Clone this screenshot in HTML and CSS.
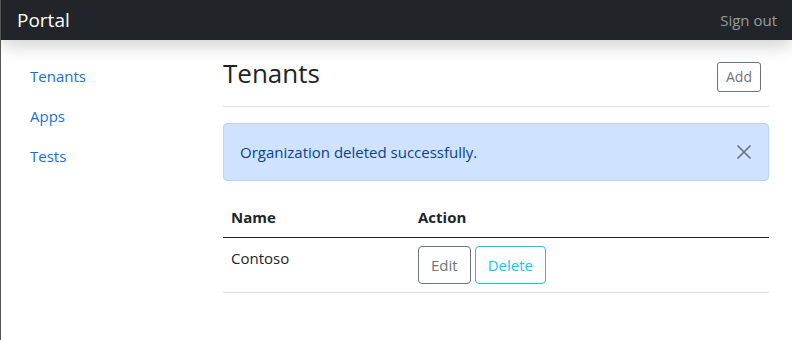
FILE: index.html
```html
<!DOCTYPE html>
<html lang="en">
<head>
    <meta charset="UTF-8">
    <meta name="viewport" content="width=device-width, initial-scale=1.0">
    <title>Portal</title>
    <link rel="stylesheet" href="styles.css">
</head>
<body>

<header class="navbar">
    <a class="brand" href="#">Portal</a>
    <a class="sign-out" href="#">Sign out</a>
</header>

<div class="layout">
    <!-- Menu lateral -->
    <nav class="sidebar">
        <ul class="nav-list">
            <li><a class="nav-link" href="#">Tenants</a></li>
            <li><a class="nav-link" href="#">Apps</a></li>
            <li><a class="nav-link" href="#">Tests</a></li>
        </ul>
    </nav>

    <main class="main">
        <div class="page-header">
            <h1 class="page-title">Tenants</h1>
            <div class="toolbar">
                <button class="btn btn-sm btn-outline-secondary">Add</button>
            </div>
        </div>

        <div class="alert">
            <span>Organization deleted successfully.</span>
            <button class="btn-close" aria-label="Close">
                <svg viewBox="0 0 16 16" width="16" height="16">
                    <path d="M1.5 1.5 L14.5 14.5 M14.5 1.5 L1.5 14.5" stroke="#000" stroke-width="1.6" fill="none"/>
                </svg>
            </button>
        </div>

        <table class="table">
            <thead>
                <tr>
                    <th class="col-name">Name</th>
                    <th>Action</th>
                </tr>
            </thead>
            <tbody>
                <tr>
                    <td>Contoso</td>
                    <td>
                        <div class="actions">
                            <button class="btn btn-outline-secondary">Edit</button>
                            <button class="btn btn-outline-info">Delete</button>
                        </div>
                    </td>
                </tr>
            </tbody>
        </table>
    </main>
</div>

</body>
</html>
```

FILE: styles.css
```css
/* General */
* {
    margin: 0;
    padding: 0;
    box-sizing: border-box;
}
body {
    font-family: "Open Sans", "Noto Sans", sans-serif;
    font-size: 15px;
    line-height: 24px;
    color: #212529;
    background-color: #fff;
    border-left: 1px solid #555;
    min-height: 100vh;
}
a {
    text-decoration: none;
}

/* Barra superior */
.navbar {
    position: relative;
    z-index: 2;
    height: 40px;
    display: flex;
    justify-content: space-between;
    align-items: center;
    padding: 0 15px 0 16px;
    background-color: #212529;
    box-shadow: 0 6px 18px rgba(0, 0, 0, 0.18);
}
.brand {
    color: #fff;
    font-size: 19px;
}
.sign-out {
    color: rgba(255, 255, 255, 0.55);
    font-size: 15px;
}

/* Columnas */
.layout {
    display: flex;
}
.sidebar {
    width: 197px;
    flex-shrink: 0;
    padding: 16px 0 0 13px;
}
.nav-list {
    list-style: none;
}
.nav-link {
    display: block;
    padding: 8px 16px;
    line-height: 24px;
    color: #1a6fd4;
}
.main {
    flex: 1;
    padding: 0 23px 0 25px;
}

/* Cabecera */
.page-header {
    display: flex;
    justify-content: space-between;
    align-items: center;
    padding: 16px 0 8px;
    margin-bottom: 16px;
    border-bottom: 1px solid #dee2e6;
}
.page-title {
    font-size: 26px;
    font-weight: 400;
    line-height: 34px;
    margin-bottom: 8px;
}
.toolbar {
    margin-right: 8px;
}

/* Botones */
.btn {
    font-family: inherit;
    font-size: 15px;
    line-height: 24px;
    padding: 6px 12px;
    background: transparent;
    border: 1px solid;
    border-radius: 4px;
    cursor: pointer;
}
.btn-sm {
    font-size: 14px;
    line-height: 20px;
    padding: 4px 8px;
    border-radius: 3px;
}
.btn-outline-secondary {
    color: #6c757d;
    border-color: #6c757d;
}
.btn-outline-info {
    color: #0dcaf0;
    border-color: #0dcaf0;
}

/* Aviso */
.alert {
    position: relative;
    padding: 16px;
    margin-bottom: 16px;
    color: #084298;
    background-color: #cfe2ff;
    border: 1px solid #b6d4fe;
    border-radius: 4px;
}
.btn-close {
    position: absolute;
    top: 0;
    right: 0;
    padding: 20px 16px;
    background: none;
    border: none;
    opacity: 0.5;
    line-height: 0;
    cursor: pointer;
}

/* Tabla */
.table {
    width: 100%;
    border-collapse: collapse;
}
.table th {
    text-align: left;
    font-weight: 700;
    padding: 8px;
    border-bottom: 1px solid #212529;
}
.table td {
    padding: 8px;
    vertical-align: top;
    border-bottom: 1px solid #dee2e6;
}
.col-name {
    width: 187px;
}
.actions {
    display: flex;
    gap: 4px;
}
```
